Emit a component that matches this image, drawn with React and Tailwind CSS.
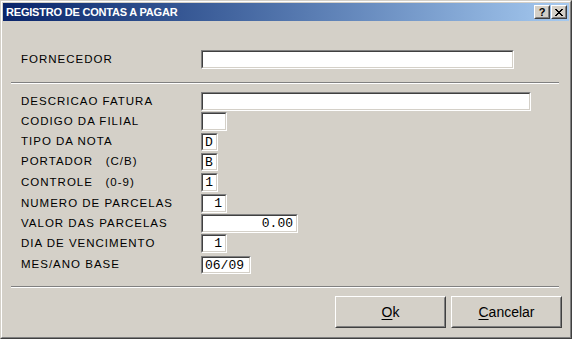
import React from 'react';

const rows = [
  { label: 'DESCRICAO FATURA', w: 330, h: 19, rowH: 20, value: '' },
  { label: 'CODIGO DA FILIAL', w: 26, h: 19, rowH: 21, value: '' },
  { label: 'TIPO DA NOTA', w: 17, h: 18, rowH: 20, value: 'D' },
  { label: 'PORTADOR   (C/B)', w: 17, h: 18, rowH: 20, value: 'B' },
  { label: 'CONTROLE   (0-9)', w: 17, h: 19, rowH: 21, value: '1', right: true },
  { label: 'NUMERO DE PARCELAS', w: 26, h: 19, rowH: 20, value: '1', right: true },
  { label: 'VALOR DAS PARCELAS', w: 97, h: 19, rowH: 20, value: '0.00', right: true },
  { label: 'DIA DE VENCIMENTO', w: 26, h: 19, rowH: 22, value: '1', right: true },
  { label: 'MES/ANO BASE', w: 50, h: 18, rowH: 18, value: '06/09' },
];

function Field({ w, h, value, right }) {
  return (
    <div
      className="border border-t-[#808080] border-l-[#808080] border-r-white border-b-white shrink-0"
      style={{ width: w, height: h }}
    >
      <div
        className={`h-full border border-t-[#404040] border-l-[#404040] border-r-[#d4d0c8] border-b-[#d4d0c8] bg-white flex items-center font-['Liberation_Mono',monospace] text-[13px] leading-none text-black ${
          right ? 'justify-end pr-[3px]' : 'pl-[2px]'
        }`}
      >
        {value}
      </div>
    </div>
  );
}

function Label({ children, h }) {
  return (
    <div className="w-[180px] shrink-0 flex items-center whitespace-pre text-[11.5px] tracking-[1px] leading-none text-black" style={{ height: h }}>
      {children}
    </div>
  );
}

function Separator({ className }) {
  return <div className={`ml-[8px] w-[548px] h-[2px] border-t border-t-[#808080] border-b border-b-white ${className}`} />;
}

function PushButton({ children }) {
  return (
    <button className="w-[111px] h-[32px] border border-t-white border-l-white border-r-[#404040] border-b-[#404040] bg-[#d4d0c8]">
      <div className="h-full flex items-center justify-center border border-t-[#d4d0c8] border-l-[#d4d0c8] border-r-[#808080] border-b-[#808080] text-[14px] text-black">
        {children}
      </div>
    </button>
  );
}

function CaptionButton({ children }) {
  return (
    <div className="w-[16px] h-[14px] border border-t-white border-l-white border-r-[#404040] border-b-[#404040] bg-[#d4d0c8]">
      <div className="h-full flex items-center justify-center border border-t-[#d4d0c8] border-l-[#d4d0c8] border-r-[#808080] border-b-[#808080]">
        {children}
      </div>
    </div>
  );
}

export default function App() {
  return (
    <div className="w-[572px] h-[339px] flex border border-t-[#d4d0c8] border-l-[#d4d0c8] border-r-[#404040] border-b-[#404040] font-['Liberation_Sans',Arial,sans-serif] select-none">
      <div className="flex-1 flex flex-col p-px bg-[#d4d0c8] border border-t-white border-l-white border-r-[#808080] border-b-[#808080]">
        <div className="h-[18px] shrink-0 flex items-center justify-between pl-[3px] pr-[2px] bg-linear-to-r from-[#0a246a] to-[#a6caf0]">
          <span className="text-white font-bold text-[11px] tracking-[-0.2px] leading-none">REGISTRO DE CONTAS A PAGAR</span>
          <div className="flex gap-[1px]">
            <CaptionButton>
              <span className="font-bold text-[11px] leading-none text-black">?</span>
            </CaptionButton>
            <CaptionButton>
              <svg width="8" height="7" viewBox="0 0 8 7" shapeRendering="crispEdges">
                <path d="M0 0h2v1h-2zM6 0h2v1h-2zM1 1h2v1h-2zM5 1h2v1h-2zM2 2h4v1h-4zM3 3h2v1h-2zM2 4h4v1h-4zM1 5h2v1h-2zM5 5h2v1h-2zM0 6h2v1h-2zM6 6h2v1h-2z" fill="#000" />
              </svg>
            </CaptionButton>
          </div>
        </div>

        <div className="flex flex-col">
          <div className="flex pl-[18px] mt-[29px]">
            <Label h={19}>FORNECEDOR</Label>
            <Field w={313} h={19} value="" />
          </div>

          <Separator className="mt-[13px]" />

          <div className="flex flex-col mt-[8px]">
            {rows.map((r) => (
              <div key={r.label} className="flex items-start pl-[18px]" style={{ height: r.rowH }}>
                <Label h={r.h}>{r.label}</Label>
                <Field w={r.w} h={r.h} value={r.value} right={r.right} />
              </div>
            ))}
          </div>

          <Separator className="mt-[12px]" />

          <div className="flex justify-end gap-[5px] pr-[7px] mt-[8px]">
            <PushButton>
              <span className="underline underline-offset-2">O</span>k
            </PushButton>
            <PushButton>
              <span className="underline underline-offset-2">C</span>ancelar
            </PushButton>
          </div>
        </div>
      </div>
    </div>
  );
}
